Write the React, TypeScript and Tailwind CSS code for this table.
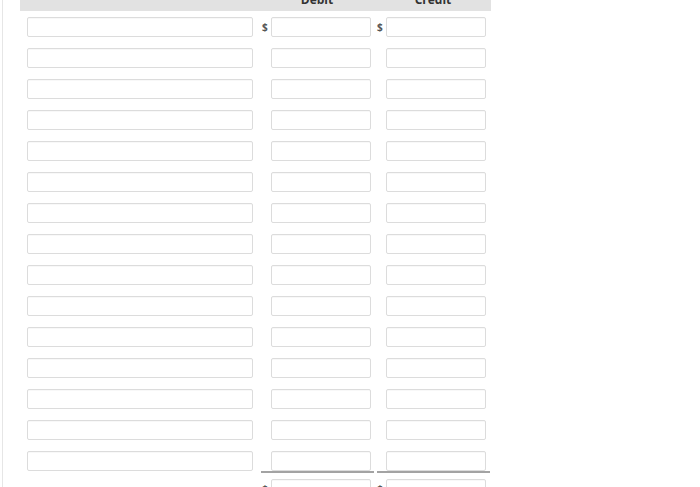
import React from "react";

const inputCls =
  "block h-[20px] border border-[#dcdcdc] rounded-[2px] bg-white shadow-[inset_0_1px_1px_rgba(0,0,0,0.03)]";

function Row({ dollar, last, total }: { dollar?: boolean; last?: boolean; total?: boolean }) {
  const pad = last ? "pt-[6px]" : "pt-[6px] pb-[5px]";
  const under = last ? "border-b-2 border-[#a3a3a3]" : "";
  return (
    <div className={`grid grid-cols-[239px_116px_116px] items-start ${pad}`}>
      <div className="pl-[7px]">
        {!total && <div className={`${inputCls} w-[226px]`} />}
      </div>
      <div className={`ml-[2px] w-[113px] flex items-center ${under}`}>
        <span className="w-[10px] pl-[1px] text-[10px] font-bold text-[#555] leading-none">
          {dollar ? "$" : ""}
        </span>
        <div className={`${inputCls} w-[100px]`} />
      </div>
      <div className={`ml-[2px] w-[113px] flex items-center ${under}`}>
        <span className="w-[9px] text-[10px] font-bold text-[#555] leading-none">
          {dollar ? "$" : ""}
        </span>
        <div className={`${inputCls} w-[100px]`} />
      </div>
    </div>
  );
}

export default function App() {
  const rows = Array.from({ length: 15 }, (_, i) => i);
  return (
    <div
      className="w-[700px] h-[487px] overflow-hidden bg-white flex"
      style={{ fontFamily: '"Open Sans", "Liberation Sans", sans-serif' }}
    >
      <div className="ml-[2px] h-[487px] border-l border-[#e6e6e6] pl-[17px] flex flex-col">
        <div className="w-[471px] flex flex-col">
          <div className="mt-[-11px] h-[22px] bg-[#e2e2e2] grid grid-cols-[239px_116px_116px] items-center text-[12px] font-bold text-[#333]">
            <div />
            <div className="text-center">Debit</div>
            <div className="text-center">Credit</div>
          </div>
          {rows.map((i) => (
            <Row key={i} dollar={i === 0} last={i === 14} />
          ))}
          <Row dollar total />
        </div>
      </div>
    </div>
  );
}
